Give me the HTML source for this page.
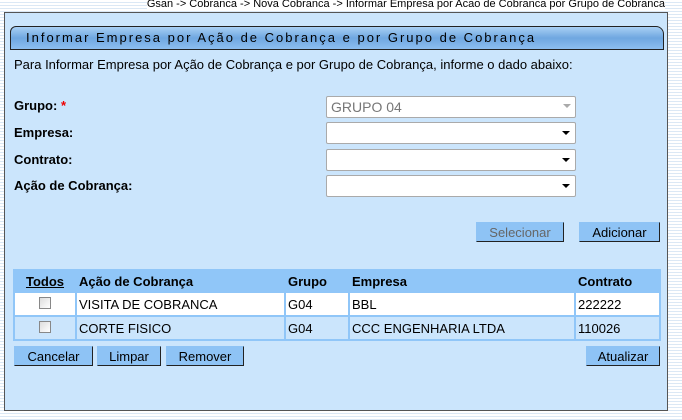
<!DOCTYPE html>
<html><head><style>
body{margin:0;width:682px;height:420px;overflow:hidden;font-family:"Liberation Sans",sans-serif;font-size:13px;
background:repeating-linear-gradient(#fff 0 2px,#dbe8f5 2px 3px);position:relative}
.a{position:absolute}
#crumb{right:17px;top:-2px;font-size:11px;color:#000;background:#fff;white-space:nowrap}
#panel{left:4px;top:12px;width:662px;height:397px;background:#cbe5fc;border:1px solid #555}
#title{left:10px;top:26px;width:637px;height:22px;border:1px solid #222;border-radius:6px 8px 0 0;
background:linear-gradient(#a9d0f5,#6fa7e0 50%,#8dbef0);font-size:13px;letter-spacing:2px;line-height:22px;padding-left:15px;color:#000;box-sizing:content-box}
.lbl{left:14px;font-weight:bold;font-size:13px}
.sel{left:326px;width:248px;height:20px;background:#fff;border:1px solid #aaa;border-radius:2px}
.sel:after{content:"";position:absolute;right:5px;top:8px;border:4px solid transparent;border-top:4px solid #000;border-bottom:0}
.btn{height:20px;background:#8ec3f5;border:1px solid #222;border-top-color:#8ec3f5;border-left-color:#8ec3f5;font-size:13px;text-align:center;line-height:20px;box-sizing:border-box}
table{position:absolute;left:13px;top:269px;width:648px;border-collapse:separate;border-spacing:2px;background:#90c6f8;font-size:13px}
td{height:22px;padding:0 2px}
th{height:20px;text-align:left;font-weight:bold;padding:0 2px}
.cb{display:inline-block;width:10px;height:10px;border:1px solid #888;background:linear-gradient(135deg,#ddd,#fff)}
</style></head><body>
<div class="a" id="crumb">Gsan -&gt; Cobranca -&gt; Nova Cobranca -&gt; Informar Empresa por Acao de Cobranca por Grupo de Cobranca</div>
<div class="a" id="panel"></div>
<div class="a" id="title">Informar Empresa por Ação de Cobrança e por Grupo de Cobrança</div>
<div class="a" style="left:14px;top:57px">Para Informar Empresa por Ação de Cobrança e por Grupo de Cobrança, informe o dado abaixo:</div>
<div class="a lbl" style="top:98px">Grupo: <span style="color:#e00">*</span></div>
<div class="a lbl" style="top:125px">Empresa:</div>
<div class="a lbl" style="top:152px">Contrato:</div>
<div class="a lbl" style="top:178px">Ação de Cobrança:</div>
<div class="a" style="left:326px;top:96px;width:244px;height:20px;background:#fff;border:1px solid #aaa;border-radius:2px;color:#777;font-size:14px;line-height:20px;padding-left:4px">GRUPO 04</div>
<div class="a" style="left:563px;top:104px;border:4px solid transparent;border-top:4px solid #aaa;border-bottom:0"></div>
<div class="a sel" style="top:122px"></div>
<div class="a sel" style="top:149px"></div>
<div class="a sel" style="top:175px"></div>
<div class="a btn" style="left:476px;top:222px;width:88px;color:#666">Selecionar</div>
<div class="a btn" style="left:579px;top:222px;width:81px">Adicionar</div>
<table>
<tr><th style="width:56px;text-align:center"><u>Todos</u></th><th style="width:203px">Ação de Cobrança</th><th style="width:58px">Grupo</th><th style="width:220px">Empresa</th><th>Contrato</th></tr>
<tr style="background:#fff"><td style="text-align:center"><span class="cb"></span></td><td>VISITA DE COBRANCA</td><td>G04</td><td>BBL</td><td>222222</td></tr>
<tr style="background:#cbe5fc"><td style="text-align:center"><span class="cb"></span></td><td>CORTE FISICO</td><td>G04</td><td>CCC ENGENHARIA LTDA</td><td>110026</td></tr>
</table>
<div class="a btn" style="left:14px;top:346px;width:79px">Cancelar</div>
<div class="a btn" style="left:97px;top:346px;width:64px">Limpar</div>
<div class="a btn" style="left:166px;top:346px;width:78px">Remover</div>
<div class="a btn" style="left:586px;top:346px;width:74px">Atualizar</div>
</body></html>
